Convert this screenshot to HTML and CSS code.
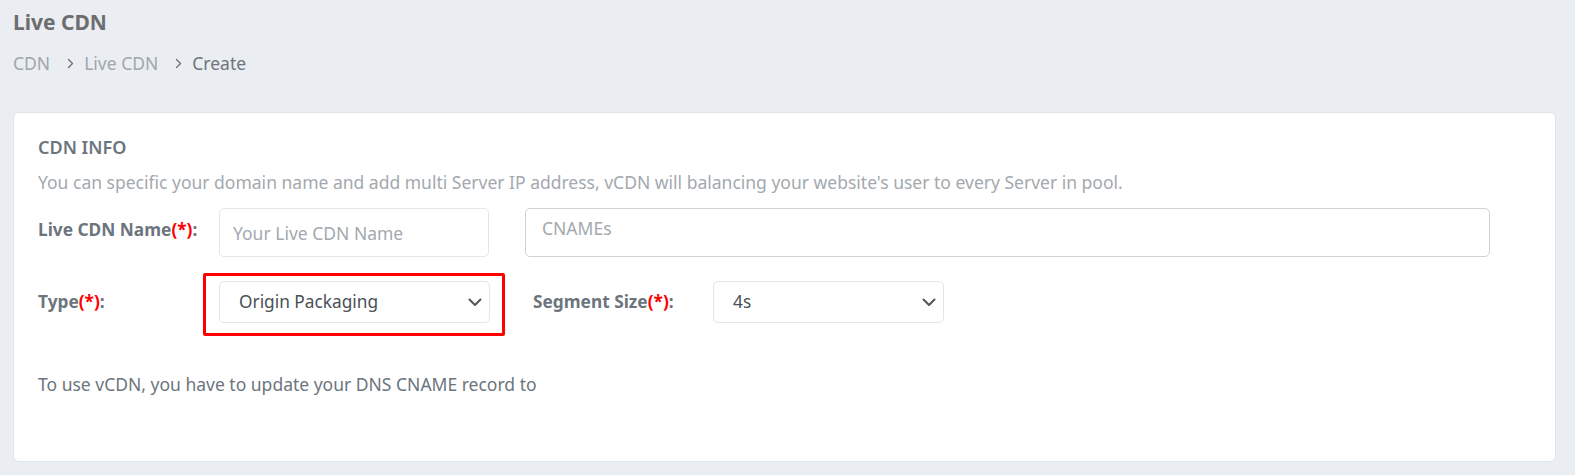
FILE: index.html
```html
<!DOCTYPE html>
<html lang="en">
<head>
<meta charset="utf-8">
<title>Live CDN - Create</title>
<link rel="stylesheet" href="styles.css">
</head>
<body>
<div class="page">
  <header class="page-header">
    <h1 class="page-title">Live CDN</h1>
    <nav class="breadcrumb">
      <span class="crumb">CDN</span>
      <svg class="sep" width="7" height="11" viewBox="0 0 7 11"><path d="M1.5 1.5 L5.5 5.5 L1.5 9.5" fill="none" stroke="#6c757d" stroke-width="1.4" stroke-linecap="round" stroke-linejoin="round"/></svg>
      <span class="crumb">Live CDN</span>
      <svg class="sep" width="7" height="11" viewBox="0 0 7 11"><path d="M1.5 1.5 L5.5 5.5 L1.5 9.5" fill="none" stroke="#6c757d" stroke-width="1.4" stroke-linecap="round" stroke-linejoin="round"/></svg>
      <span class="crumb current">Create</span>
    </nav>
  </header>

  <section class="card">
    <h2 class="card-title">CDN INFO</h2>
    <p class="card-desc">You can specific your domain name and add multi Server IP address, vCDN will balancing your website's user to every Server in pool.</p>

    <div class="row row-name">
      <label class="label label-top">Live CDN Name<span class="req">(*)</span>:</label>
      <input class="input input-name" type="text" placeholder="Your Live CDN Name">
      <textarea class="input textarea" placeholder="CNAMEs"></textarea>
    </div>

    <div class="row row-type">
      <label class="label">Type<span class="req">(*)</span>:</label>
      <div class="select select-type">
        <span class="select-value">Origin Packaging</span>
        <svg class="chev" width="14" height="9" viewBox="0 0 14 9"><path d="M1.5 1.5 L7 7 L12.5 1.5" fill="none" stroke="#555" stroke-width="2" stroke-linecap="round" stroke-linejoin="round"/></svg>
        <span class="highlight"></span>
      </div>
      <label class="label label-seg">Segment Size<span class="req">(*)</span>:</label>
      <div class="select select-seg">
        <span class="select-value">4s</span>
        <svg class="chev" width="14" height="9" viewBox="0 0 14 9"><path d="M1.5 1.5 L7 7 L12.5 1.5" fill="none" stroke="#555" stroke-width="2" stroke-linecap="round" stroke-linejoin="round"/></svg>
      </div>
    </div>

    <p class="note">To use vCDN, you have to update your DNS CNAME record to</p>
  </section>
</div>
</body>
</html>
```

FILE: styles.css
```css
* { box-sizing: border-box; }

html, body {
  margin: 0;
  padding: 0;
  background: #eaedf1;
  font-family: "Noto Sans", "Open Sans", "DejaVu Sans", sans-serif;
  color: #6c757d;
}

.page {
  padding: 0 19px 0 13px;
  height: 475px;
  overflow: hidden;
}

.page-header {
  padding-top: 9px;
}

.page-title {
  margin: 0;
  font-size: 21px;
  line-height: 27px;
  font-weight: 700;
  color: #6d6d70;
}

.breadcrumb {
  margin-top: 15px;
  display: flex;
  align-items: center;
  font-size: 17.5px;
  line-height: 24px;
  color: #a1a6ab;
}

.breadcrumb .sep {
  display: block;
  margin: 1px 10px 0 17px;
}

.breadcrumb .current {
  color: #6c757d;
}

.card {
  margin-top: 37px;
  background: #fff;
  border: 1px solid #e1e5ea;
  border-radius: 6px;
  padding: 22px 24px 64px 24px;
  height: 350px;
}

.card-title {
  margin: 0;
  font-size: 18px;
  line-height: 24px;
  font-weight: 600;
  color: #6c757d;
}

.card-desc {
  margin: 11px 0 0 0;
  font-size: 17.5px;
  line-height: 24px;
  color: #a3a9ae;
}

.row {
  display: flex;
}

.row-name {
  margin-top: 14px;
  align-items: flex-start;
}

.row-type {
  margin-top: 24px;
  align-items: center;
}

.label {
  width: 181px;
  flex: none;
  font-size: 17.3px;
  line-height: 24px;
  font-weight: 700;
  color: #6c757d;
}

.label-top {
  padding-top: 10px;
}

.req {
  color: #ff0000;
}

.input {
  font-family: inherit;
  font-size: 17.5px;
  color: #495057;
  background: #fff;
  border: 1px solid #e3e5e8;
  border-radius: 5px;
  outline: none;
}

.input::placeholder {
  color: #a3a9ae;
}

.input-name {
  width: 270px;
  height: 49px;
  padding: 0 13px;
  line-height: 24px;
}

.textarea {
  margin-left: 36px;
  width: 965px;
  height: 49px;
  padding: 7px 16px;
  line-height: 24px;
  resize: none;
  border-color: #cfd2d6;
}

.select {
  position: relative;
  flex: none;
  display: flex;
  align-items: center;
  justify-content: space-between;
  height: 42px;
  padding: 0 7px 0 19px;
  border: 1px solid #e3e5e8;
  border-radius: 5px;
  font-size: 17.3px;
  line-height: 24px;
  color: #495057;
  background: #fff;
}

.select-type {
  width: 271px;
}

.select-seg {
  width: 231px;
}

.label-seg {
  margin-left: 43px;
  width: 180px;
}

.chev {
  display: block;
}

.highlight {
  position: absolute;
  left: -17px;
  right: -16px;
  top: -9px;
  bottom: -14px;
  border: 3px solid #ff0000;
  border-radius: 2px;
  pointer-events: none;
}

.note {
  margin: 49px 0 0 0;
  font-size: 17.5px;
  line-height: 24px;
  color: #6c757d;
}
```
